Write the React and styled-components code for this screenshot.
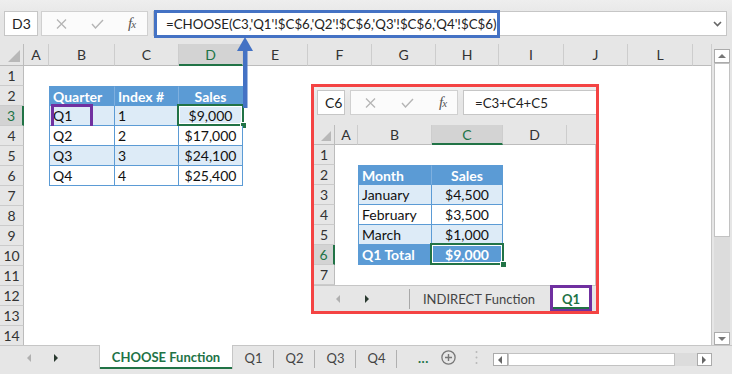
import React from 'react';
import styled, { createGlobalStyle, css } from 'styled-components';

const UI = `'Lato', 'Liberation Sans', sans-serif`;
const CELL = `'Lato', 'Liberation Sans', sans-serif`;
const GREEN = '#217346';
const BLUE = '#4472c4';
const TABLE = '#5b9bd5';
const PURPLE = '#7030a0';
const RED = '#f44343';

const GlobalStyle = createGlobalStyle`
  html, body { margin: 0; padding: 0; background: #e6e6e6; }
  body { font-family: ${UI}; }
`;

const MAIN_COLS = [
  ['A', 25], ['B', 66], ['C', 64], ['D', 64], ['E', 65], ['F', 64],
  ['G', 64], ['H', 63], ['I', 65], ['J', 64], ['L', 65], ['', 19],
];
// last column of the inset is cut off by the frame, its letter is out of view
const INSET_COLS = [['A', 23], ['B', 74], ['C', 71], ['D', 64], ['', 64]];

const MAIN_CELLS = {
  B2: { text: 'Quarter', tone: 'head' },
  C2: { text: 'Index #', tone: 'head' },
  D2: { text: 'Sales', tone: 'head', align: 'center' },
  B3: { text: 'Q1', tone: 'band', mark: true },
  C3: { text: '1', tone: 'band' },
  D3: { text: '$9,000', tone: 'band', align: 'center', selected: true },
  B4: { text: 'Q2', tone: 'plain' },
  C4: { text: '2', tone: 'plain' },
  D4: { text: '$17,000', tone: 'plain', align: 'center' },
  B5: { text: 'Q3', tone: 'band' },
  C5: { text: '3', tone: 'band' },
  D5: { text: '$24,100', tone: 'band', align: 'center' },
  B6: { text: 'Q4', tone: 'plain' },
  C6: { text: '4', tone: 'plain' },
  D6: { text: '$25,400', tone: 'plain', align: 'center' },
};

const INSET_CELLS = {
  B2: { text: 'Month', tone: 'head' },
  C2: { text: 'Sales', tone: 'head', align: 'center' },
  B3: { text: 'January', tone: 'band' },
  C3: { text: '$4,500', tone: 'band', align: 'center' },
  B4: { text: 'February', tone: 'plain' },
  C4: { text: '$3,500', tone: 'plain', align: 'center' },
  B5: { text: 'March', tone: 'band' },
  C5: { text: '$1,000', tone: 'band', align: 'center' },
  B6: { text: 'Q1 Total', tone: 'head' },
  C6: { text: '$9,000', tone: 'head', align: 'center', selected: true },
};

const TONES = {
  head: { bg: TABLE, color: '#fff', weight: 700, line: '#7fb0df' },
  band: { bg: '#ddebf7', color: '#111', weight: 400, line: TABLE },
  plain: { bg: '#fff', color: '#111', weight: 400, line: TABLE },
};

const Window = styled.div`
  position: relative;
  width: 732px;
  height: 374px;
  overflow: hidden;
  display: flex;
  flex-direction: column;
  background: #e6e6e6;
`;

/* formula bar */
const FormulaBar = styled.div`
  flex: none;
  display: flex;
  align-items: flex-start;
  box-sizing: border-box;
  height: ${(p) => p.$h}px;
  padding: ${(p) => p.$pad};
  background: linear-gradient(#eeeeee, #e6e6e6 40%);
`;

const NameBox = styled.div`
  flex: none;
  box-sizing: border-box;
  width: ${(p) => p.$w}px;
  height: 25px;
  margin-right: ${(p) => p.$gap}px;
  padding-left: 7px;
  display: flex;
  align-items: center;
  background: #fff;
  border: 1px solid #c6c6c6;
  font: 14px ${UI};
  color: #222;
`;

const FxGroup = styled.div`
  flex: none;
  box-sizing: border-box;
  width: ${(p) => p.$w}px;
  height: 25px;
  margin-right: 5px;
  padding-left: 14px;
  display: flex;
  align-items: center;
  gap: ${(p) => p.$gap}px;
  background: #fbfbfb;
  border: 1px solid #d0d0d0;
`;

const Fx = styled.span`
  font: italic 15px 'Liberation Serif', serif;
  color: #555;
  letter-spacing: -1px;
  small { font-size: 11px; }
`;

const FormulaField = styled.div`
  flex: 1;
  box-sizing: border-box;
  height: 25px;
  margin-right: ${(p) => p.$mr}px;
  display: flex;
  align-items: center;
  background: #fff;
  border: 1px solid #c6c6c6;
  font: 13.3px ${UI};
  color: #222;
  white-space: nowrap;
`;

const FormulaText = styled.span`
  padding-left: ${(p) => p.$pl}px;
`;

const Highlight = styled.span`
  flex: none;
  box-sizing: border-box;
  width: 346px;
  height: 28px;
  padding-left: 9px;
  display: flex;
  align-items: center;
  border: 3px solid ${BLUE};
`;

const Chevron = styled.svg`
  margin-left: auto;
  margin-right: 4px;
`;

/* sheet */
const SheetArea = styled.div`
  flex: none;
  display: flex;
  height: 301px;
  overflow: hidden;
`;

const SheetGrid = styled.div`
  flex: none;
  display: grid;
  grid-template-columns: ${(p) => p.$cols};
  grid-template-rows: ${(p) => p.$rows};
  width: ${(p) => p.$w}px;
  overflow: hidden;
  background: #fff;
  box-shadow: inset -1px 0 0 #c6c6c6;
`;

const Corner = styled.div`
  position: relative;
  background: #e6e6e6;
  border-right: 1px solid #bcbcbc;
  border-bottom: 1px solid #bcbcbc;
  &::after {
    content: '';
    position: absolute;
    right: 3px;
    bottom: 3px;
    border-style: solid;
    border-width: 0 0 ${(p) => p.$s}px ${(p) => p.$s}px;
    border-color: transparent transparent #b8b8b8 transparent;
  }
`;

const ColHead = styled.div`
  display: flex;
  align-items: center;
  justify-content: center;
  background: ${(p) => (p.$active ? '#d3d3d3' : '#e6e6e6')};
  color: ${(p) => (p.$active ? GREEN : '#333')};
  border-right: 1px solid #cdcdcd;
  border-bottom: ${(p) => (p.$active ? `2px solid ${GREEN}` : '1px solid #bcbcbc')};
  font: 14px ${UI};
`;

const RowHead = styled.div`
  display: flex;
  align-items: center;
  justify-content: center;
  background: ${(p) => (p.$active ? '#d3d3d3' : '#e6e6e6')};
  color: ${(p) => (p.$active ? GREEN : '#333')};
  border-right: ${(p) => (p.$active ? `2px solid ${GREEN}` : '1px solid #bcbcbc')};
  border-bottom: 1px solid #cbcbcb;
  font: 14px ${UI};
`;

const Cell = styled.div`
  position: relative;
  box-sizing: border-box;
  display: flex;
  align-items: center;
  justify-content: ${(p) => (p.$align === 'center' ? 'center' : 'flex-start')};
  padding: 0 3px;
  font: 14px ${CELL};
  white-space: nowrap;
  ${(p) =>
    p.$tone &&
    css`
      background: ${TONES[p.$tone].bg};
      color: ${TONES[p.$tone].color};
      font-weight: ${TONES[p.$tone].weight};
      border-right: 1px solid ${p.$lastCol ? TABLE : TONES[p.$tone].line};
      border-bottom: 1px solid ${TABLE};
    `}
  ${(p) => p.$edgeLeft && `border-left: 1px solid ${TABLE};`}
  ${(p) => p.$edgeTop && `border-top: 1px solid ${TABLE};`}
`;

const SelectBox = styled.span`
  position: absolute;
  left: -2px;
  top: -2px;
  right: -2px;
  bottom: -1px;
  border: 2px solid ${GREEN};
  box-shadow: inset 0 0 0 1px #fff;
  &::after {
    content: '';
    position: absolute;
    right: -5px;
    bottom: -5px;
    width: 5px;
    height: 5px;
    background: ${GREEN};
    border: 1px solid #fff;
  }
`;

const MarkBox = styled.span`
  position: absolute;
  left: 1px;
  top: -2px;
  width: 42px;
  height: 25px;
  box-sizing: border-box;
  border: 3px solid ${PURPLE};
`;

/* scrollbars */
const VScroll = styled.div`
  flex: none;
  width: 16px;
  margin: 5px 2px 0;
  display: flex;
  flex-direction: column;
  background: #dcdcdc;
`;

const ScrollBtn = styled.div`
  flex: none;
  box-sizing: border-box;
  width: ${(p) => p.$w || 'auto'};
  height: ${(p) => p.$h || 'auto'};
  display: flex;
  align-items: center;
  justify-content: center;
  background: #fff;
  border: 1px solid #ababab;
`;

const Thumb = styled.div`
  flex: none;
  box-sizing: border-box;
  width: ${(p) => p.$w || 'auto'};
  height: ${(p) => p.$h || 'auto'};
  background: #fff;
  border: 1px solid #c2c2c2;
`;

const Spacer = styled.div`
  flex: 1;
`;

const HScroll = styled.div`
  flex: none;
  display: flex;
  width: 219px;
  height: 13px;
  margin: 7px 0 0 15px;
  background: #dcdcdc;
`;

const Tri = styled.span`
  flex: none;
  width: 0;
  height: 0;
  border-style: solid;
  ${({ $dir, $s = 4, $c = '#444' }) =>
    ({
      left: `border-width:${$s}px ${$s}px ${$s}px 0; border-color: transparent ${$c} transparent transparent;`,
      right: `border-width:${$s}px 0 ${$s}px ${$s}px; border-color: transparent transparent transparent ${$c};`,
      up: `border-width:0 ${$s}px ${$s}px; border-color: transparent transparent ${$c};`,
      down: `border-width:${$s}px ${$s}px 0; border-color: ${$c} transparent transparent;`,
    })[$dir]}
`;

/* tabs */
const TabBar = styled.div`
  flex: none;
  box-sizing: border-box;
  display: flex;
  align-items: flex-start;
  height: ${(p) => p.$h}px;
  border-top: 1px solid #c6c6c6;
  background: #e6e6e6;
`;

const NavArrows = styled.div`
  flex: none;
  box-sizing: border-box;
  width: ${(p) => p.$w}px;
  height: ${(p) => p.$h}px;
  margin-top: ${(p) => p.$mt || 0}px;
  padding-left: ${(p) => p.$pl}px;
  display: flex;
  align-items: center;
  gap: ${(p) => p.$gap}px;
  ${(p) => p.$divider && 'border-right: 1px solid #a8a8a8;'}
`;

const Tab = styled.div`
  position: relative;
  flex: none;
  box-sizing: border-box;
  width: ${(p) => p.$w}px;
  height: ${(p) => p.$h}px;
  margin-left: ${(p) => p.$ml || 0}px;
  display: flex;
  align-items: center;
  justify-content: center;
  font: 13px ${UI};
  color: #444;
  ${(p) =>
    p.$sep &&
    css`
      &::after {
        content: '';
        position: absolute;
        right: 0;
        top: 4px;
        width: 1px;
        height: 18px;
        background: #b0b0b0;
      }
    `}
  ${(p) =>
    p.$active &&
    css`
      margin-top: -1px;
      height: ${p.$h + 1}px;
      background: #fff;
      color: ${GREEN};
      font-weight: 700;
      border-left: 1px solid #c6c6c6;
      border-right: 1px solid #c6c6c6;
      box-shadow: inset 0 -2px 0 ${GREEN};
    `}
  ${(p) => p.$marked && `border: 3px solid ${PURPLE};`}
`;

const More = styled.span`
  flex: none;
  margin: 4px 0 0 21px;
  font: 700 13px ${UI};
  color: ${GREEN};
  letter-spacing: 0.5px;
`;

const IconSlot = styled.span`
  flex: none;
  display: flex;
  margin: ${(p) => p.$m};
`;

/* overlays */
const Inset = styled.div`
  position: absolute;
  left: 311px;
  top: 84px;
  width: 288px;
  height: 230px;
  box-sizing: border-box;
  border: 3px solid ${RED};
  display: flex;
  flex-direction: column;
  overflow: hidden;
  background: #e6e6e6;
`;

const Arrow = styled.svg`
  position: absolute;
  left: 236px;
  top: 36px;
`;

const XIcon = () => (
  <svg width="11" height="10" viewBox="0 0 11 10">
    <path d="M1 0.5 L10 9.5 M10 0.5 L1 9.5" stroke="#b5b5b5" strokeWidth="1.3" fill="none" />
  </svg>
);

const CheckIcon = () => (
  <svg width="13" height="10" viewBox="0 0 13 10">
    <path d="M1 5 L4.5 9 L12 1" stroke="#b5b5b5" strokeWidth="1.4" fill="none" />
  </svg>
);

function Formula({ h, pad, nameW, name, fxW, children, mr }) {
  return (
    <FormulaBar $h={h} $pad={pad}>
      <NameBox $w={nameW} $gap={5 - (nameW > 30 ? 2 : 0)}>{name}</NameBox>
      <FxGroup $w={fxW} $gap={fxW > 107 ? 25 : 24}>
        <XIcon />
        <CheckIcon />
        <Fx>
          f<small>x</small>
        </Fx>
      </FxGroup>
      <FormulaField $mr={mr}>{children}</FormulaField>
    </FormulaBar>
  );
}

function Sheet({ cols, rows, cells, rowHeadW, headH, width, activeCol, activeRow, cornerSize }) {
  const template = [rowHeadW, ...cols.map((c) => c[1])].map((w) => `${w}px`).join(' ');
  const letters = cols.map((c) => c[0]);
  const has = (l, r) => Boolean(l && cells[`${l}${r}`]);

  return (
    <SheetGrid $cols={template} $rows={`${headH}px repeat(${rows}, 20px)`} $w={width}>
      <Corner $s={cornerSize} />
      {letters.map((l, i) => (
        <ColHead key={i} $active={l === activeCol}>
          {l}
        </ColHead>
      ))}
      {Array.from({ length: rows }, (_, i) => {
        const r = i + 1;
        return (
          <React.Fragment key={r}>
            <RowHead $active={r === activeRow}>{r}</RowHead>
            {letters.map((l, ci) => {
              const c = l && cells[`${l}${r}`];
              if (!c) return <Cell key={ci} />;
              return (
                <Cell
                  key={ci}
                  $tone={c.tone}
                  $align={c.align}
                  $edgeLeft={!has(letters[ci - 1], r)}
                  $edgeTop={!has(l, r - 1)}
                  $lastCol={!has(letters[ci + 1], r)}
                >
                  {c.text}
                  {c.mark && <MarkBox />}
                  {c.selected && <SelectBox />}
                </Cell>
              );
            })}
          </React.Fragment>
        );
      })}
    </SheetGrid>
  );
}

export default function App() {
  return (
    <Window>
      <GlobalStyle />
      <Formula h={44} pad="11px 5px 0 4px" nameW={34} name="D3" fxW={107} mr={0}>
        <Highlight>=CHOOSE(C3,'Q1'!$C$6,'Q2'!$C$6,'Q3'!$C$6,'Q4'!$C$6)</Highlight>
        <Chevron width="9" height="6" viewBox="0 0 9 6">
          <path d="M1 1 L4.5 4.5 L8 1" stroke="#666" strokeWidth="1.6" fill="none" />
        </Chevron>
      </Formula>

      <SheetArea>
        <Sheet
          cols={MAIN_COLS}
          rows={14}
          cells={MAIN_CELLS}
          rowHeadW={24}
          headH={22}
          width={712}
          activeCol="D"
          activeRow={3}
          cornerSize={12}
        />
        <VScroll>
          <ScrollBtn $h="14px">
            <Tri $dir="up" $s={4} $c="#777" />
          </ScrollBtn>
          <Thumb $h="174px" />
          <Spacer />
          <ScrollBtn $h="13px">
            <Tri $dir="down" $s={4} $c="#777" />
          </ScrollBtn>
        </VScroll>
      </SheetArea>

      <TabBar $h={29}>
        <NavArrows $w={99} $h={23} $pl={27} $gap={23}>
          <Tri $dir="left" $s={4} $c="#b0b0b0" />
          <Tri $dir="right" $s={4} $c="#2a3a30" />
        </NavArrows>
        <Tab $w={134} $h={23} $active>
          CHOOSE Function
        </Tab>
        <Tab $w={41} $h={23} $sep>Q1</Tab>
        <Tab $w={41} $h={23} $sep>Q2</Tab>
        <Tab $w={41} $h={23} $sep>Q3</Tab>
        <Tab $w={41} $h={23} $sep>Q4</Tab>
        <More>...</More>
        <IconSlot $m="4px 0 0 12px">
          <svg width="15" height="15" viewBox="0 0 15 15">
            <circle cx="7.5" cy="7.5" r="6.6" stroke="#777" strokeWidth="1.3" fill="none" />
            <path d="M7.5 4 V11 M4 7.5 H11" stroke="#777" strokeWidth="1.4" />
          </svg>
        </IconSlot>
        <IconSlot $m="4px 0 0 19px">
          <svg width="3" height="15" viewBox="0 0 3 15">
            <circle cx="1.5" cy="2" r="1" fill="#b8b8b8" />
            <circle cx="1.5" cy="7.5" r="1" fill="#b8b8b8" />
            <circle cx="1.5" cy="13" r="1" fill="#b8b8b8" />
          </svg>
        </IconSlot>
        <HScroll>
          <ScrollBtn $w="15px">
            <Tri $dir="left" $s={4} $c="#666" />
          </ScrollBtn>
          <Thumb $w="167px" />
          <Spacer />
          <ScrollBtn $w="15px">
            <Tri $dir="right" $s={4} $c="#666" />
          </ScrollBtn>
        </HScroll>
      </TabBar>

      <Arrow width="18" height="74" viewBox="0 0 18 74">
        <polygon points="9,1 1,15 17,15" fill={BLUE} />
        <rect x="7" y="14" width="4.5" height="58" fill={BLUE} />
      </Arrow>

      <Inset>
        <Formula h={38} pad="3px 0 0 3px" nameW={28} name="C6" fxW={108} mr={-2}>
          <FormulaText $pl={11}>=C3+C4+C5</FormulaText>
        </Formula>
        <Sheet
          cols={INSET_COLS}
          rows={7}
          cells={INSET_CELLS}
          rowHeadW={21}
          headH={20}
          width={282}
          activeCol="C"
          activeRow={6}
          cornerSize={10}
        />
        <TabBar $h={26}>
          <NavArrows $w={96} $h={20} $mt={3} $pl={22} $gap={25} $divider>
            <Tri $dir="left" $s={4} $c="#b0b0b0" />
            <Tri $dir="right" $s={4} $c="#2a3a30" />
          </NavArrows>
          <Tab $w={138} $h={25}>INDIRECT Function</Tab>
          <Tab $w={42} $h={26} $ml={2} $active $marked>
            Q1
          </Tab>
        </TabBar>
      </Inset>
    </Window>
  );
}
